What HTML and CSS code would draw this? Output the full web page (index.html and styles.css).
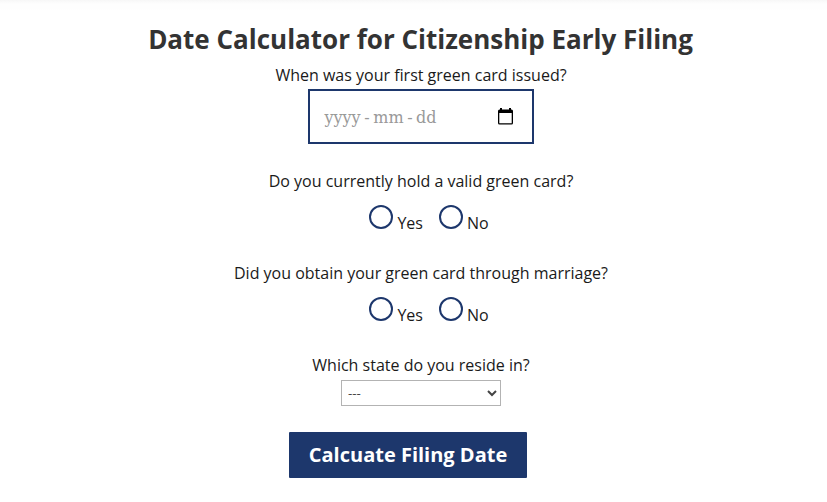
FILE: index.html
```html
<!DOCTYPE html>
<html lang="en">

<head>
  <meta charset="UTF-8">
  <meta name="viewport" content="width=device-width, initial-scale=1.0">
  <title>Date Calculator for Citizenship Early Filing</title>
  <link rel="stylesheet" href="styles.css">
</head>

<body>
  <main class="calculator">
    <h1>Date Calculator for Citizenship Early Filing</h1>

    <form class="calc-form">
      <div class="question">
        <p>When was your first green card issued?</p>
        <div class="date-field" tabindex="0">
          <span class="date-text"><span class="year">yyyy</span><span class="dash">-</span><span class="month">mm</span><span class="dash">-</span><span class="day">dd</span></span>
          <svg class="calendar" width="15" height="17" viewBox="0 0 15 17">
            <path d="M1.5 1.5h12A1.5 1.5 0 0 1 15 3v12a1.5 1.5 0 0 1-1.5 1.5h-12A1.5 1.5 0 0 1 0 15V3a1.5 1.5 0 0 1 1.5-1.5zM1.3 5v10.2h12.4V5z" fill-rule="evenodd" />
            <path d="M2 0h2v2H2zM11 0h2v2h-2z" />
          </svg>
        </div>
      </div>

      <div class="question">
        <p>Do you currently hold a valid green card?</p>
        <div class="options">
          <label><input type="radio" name="valid" value="yes"><span>Yes</span></label>
          <label><input type="radio" name="valid" value="no"><span>No</span></label>
        </div>
      </div>

      <div class="question">
        <p>Did you obtain your green card through marriage?</p>
        <div class="options">
          <label><input type="radio" name="marriage" value="yes"><span>Yes</span></label>
          <label><input type="radio" name="marriage" value="no"><span>No</span></label>
        </div>
      </div>

      <div class="question state">
        <p>Which state do you reside in?</p>
        <select name="state">
          <option>---</option>
        </select>
      </div>

      <button type="button" class="submit">Calcuate Filing Date</button>
    </form>
  </main>
</body>

</html>
```

FILE: styles.css
```css
body {
  margin: 0;
  background: linear-gradient(#f7f7f7, #fefefe 4px, #fefefe 9px, #fff 10px) no-repeat #fff;
  color: #1a1a1a;
  font-family: "Open Sans", sans-serif;
  font-size: 16px;
}

.calculator {
  padding: 21px 0 0 14px;
  text-align: center;
}

h1 {
  margin: 0;
  color: #333;
  font-size: 26px;
  font-weight: 700;
  line-height: 36px;
}

.calc-form {
  display: flex;
  flex-direction: column;
  align-items: center;
  margin-top: 6px;
  padding-left: 1px;
}

.question {
  display: flex;
  flex-direction: column;
  align-items: center;
}

.question + .question {
  margin-top: 5px;
}

.question p {
  margin: 0;
  line-height: 24px;
}

.date-field {
  display: flex;
  align-items: center;
  justify-content: space-between;
  box-sizing: border-box;
  width: 226px;
  height: 55px;
  margin: 2px 0 20px;
  padding: 0 19px 0 14px;
  border: 2px solid #1d376c;
  background: #fff;
}

.date-text {
  display: flex;
  padding-top: 1px;
  color: #999;
  font-family: "DejaVu Serif", serif;
  font-size: 16px;
}

.year {
  width: 37px;
}

.dash {
  width: 12px;
  text-align: center;
}

.month {
  width: 31px;
}

.options {
  display: flex;
  gap: 16px;
  height: 43px;
  margin: 12px 0 8px;
  padding-left: 16px;
}

.options label {
  display: flex;
  align-items: flex-start;
  gap: 4px;
}

.options input {
  appearance: none;
  width: 24px;
  height: 24px;
  margin: 0;
  border: 2px solid #1d376c;
  border-radius: 50%;
}

.options span {
  margin-top: 6px;
  line-height: 24px;
}

.state select {
  width: 160px;
  height: 26px;
  margin-top: 3px;
  padding: 0 2px;
  border: 1px solid #b3b3b3;
  border-radius: 0;
  background: #fff;
  color: #444;
  font-family: "Open Sans", sans-serif;
  font-size: 13.333px;
}

.submit {
  width: 238px;
  height: 46px;
  margin: 26px 26px 0 0;
  padding: 0 0 2px;
  border: 0;
  border-radius: 1px;
  background: #1d376c;
  color: #fff;
  font-family: "Open Sans", sans-serif;
  font-size: 20px;
  font-weight: 700;
}
```
